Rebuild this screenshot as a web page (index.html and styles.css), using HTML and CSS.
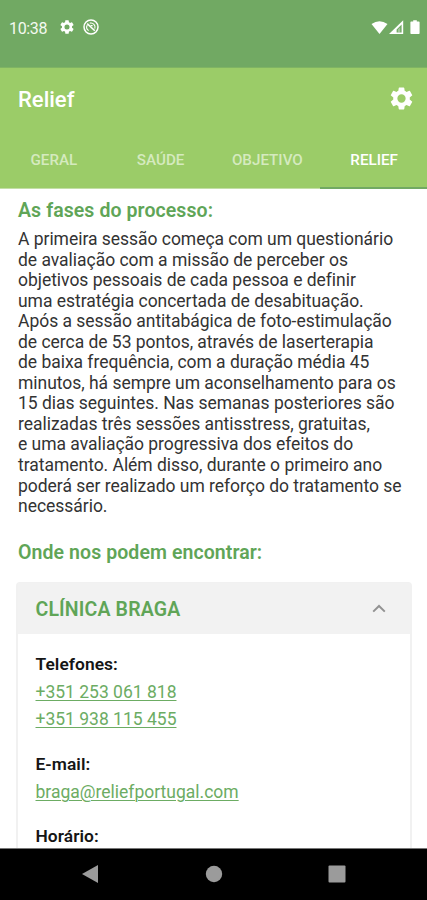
FILE: index.html
```html
<!DOCTYPE html>
<html lang="pt">
<head>
<meta charset="utf-8">
<title>Relief</title>
<link rel="stylesheet" href="styles.css">
</head>
<body>
<svg class="defs" width="0" height="0" aria-hidden="true">
  <symbol id="gear" viewBox="2 2 20 20"><path d="M19.14 12.94c.04-.3.06-.61.06-.94 0-.32-.02-.64-.07-.94l2.03-1.58a.49.49 0 0 0 .12-.61l-1.92-3.32a.49.49 0 0 0-.59-.22l-2.39.96c-.5-.38-1.03-.7-1.62-.94l-.36-2.54a.48.48 0 0 0-.48-.41h-3.84c-.24 0-.43.17-.47.41l-.36 2.54c-.59.24-1.13.57-1.62.94l-2.39-.96a.48.48 0 0 0-.59.22L2.74 8.87c-.12.21-.08.47.12.61l2.03 1.58c-.05.3-.09.63-.09.94s.02.64.07.94l-2.03 1.58a.49.49 0 0 0-.12.61l1.92 3.32c.12.22.37.29.59.22l2.39-.96c.5.38 1.03.7 1.62.94l.36 2.54c.05.24.24.41.48.41h3.84c.24 0 .44-.17.47-.41l.36-2.54c.59-.24 1.13-.56 1.62-.94l2.39.96c.22.08.47 0 .59-.22l1.92-3.32a.48.48 0 0 0-.12-.61l-2.01-1.58zM12 15.6a3.6 3.6 0 1 1 0-7.2 3.6 3.6 0 0 1 0 7.2z"/></symbol>
</svg>
<div class="screen">
  <div class="status">
    <span class="time">10:38</span>
    <svg class="s-gear"><use href="#gear"/></svg>
    <svg class="s-sync" viewBox="0 0 16 16"><g fill="none" stroke="#fff"><circle cx="8" cy="8" r="7" stroke-width="1.5"/><path d="M5.6 11.6A4.2 4.2 0 0 1 4.3 6M6.8 4.1A4.2 4.2 0 0 1 11.8 9.6M7.6 6.6H9.6" stroke-width="1.1"/><path d="M4.2 4.6l7.6 7.2" stroke-width="1.5"/></g></svg>
    <svg class="s-right" viewBox="0 0 50 16" fill="#fff"><path d="M0.5 4Q8.5-1.6 16.5 4L8.5 14z"/><path fill-rule="evenodd" d="M18 14L32.2 .2V14zM25.6 12.5H30.6V4.6L25.6 9.6z"/><path d="M26.9 12.5V9.6L29.2 7.3v5.2z" opacity=".35"/><path d="M40.2 1.4h2V.2h3.6v1.2h2a.8.8 0 0 1 .8.8v11a.8.8 0 0 1-.8.8h-7.6a.8.8 0 0 1-.8-.8v-11a.8.8 0 0 1 .8-.8z"/></svg>
  </div>
  <header>
    <div class="bar"><h1>Relief</h1><svg class="gear"><use href="#gear"/></svg></div>
    <nav><span>GERAL</span><span>SAÚDE</span><span>OBJETIVO</span><span class="active">RELIEF</span></nav>
  </header>
  <main>
    <h2>As fases do processo:</h2>
    <p class="copy">A primeira sessão começa com um questionário<br>de avaliação com a missão de perceber os<br>objetivos pessoais de cada pessoa e definir<br>uma estratégia concertada de desabituação.<br>Após a sessão antitabágica de foto-estimulação<br>de cerca de 53 pontos, através de laserterapia<br>de baixa frequência, com a duração média 45<br>minutos, há sempre um aconselhamento para os<br>15 dias seguintes. Nas semanas posteriores são<br>realizadas três sessões antisstress, gratuitas,<br>e uma avaliação progressiva dos efeitos do<br>tratamento. Além disso, durante o primeiro ano<br>poderá ser realizado um reforço do tratamento se<br>necessário.</p>
    <h2 class="where">Onde nos podem encontrar:</h2>
    <section class="card">
      <div class="card-head"><h3>CLÍNICA BRAGA</h3><svg class="chev" viewBox="0 0 14 9"><path d="M1.2 7.6L7 2l5.8 5.6" fill="none" stroke="#929292" stroke-width="2"/></svg></div>
      <div class="card-body">
        <h4>Telefones:</h4>
        <a>+351 253 061 818</a>
        <a>+351 938 115 455</a>
        <h4 class="gap">E-mail:</h4>
        <a class="mail">braga@reliefportugal.com</a>
        <h4 class="gap">Horário:</h4>
      </div>
    </section>
  </main>
  <footer>
    <svg viewBox="0 0 18 18"><path d="M17 0v18L1 9z"/></svg>
    <svg viewBox="0 0 18 18"><circle cx="9" cy="9" r="8.2"/></svg>
    <svg viewBox="0 0 18 18"><rect x=".5" y=".5" width="17" height="17" rx="1"/></svg>
  </footer>
</div>
</body>
</html>
```
FILE: styles.css
```css
* { box-sizing: border-box; }
body, h1, h2, h3, h4, p { margin: 0; }
body { font-family: Roboto, sans-serif; background: #fff; overflow: hidden; }
.defs { display: block; }
.screen { width: 427px; height: 900px; display: flex; flex-direction: column; overflow: hidden; }
.status { flex: none; height: 68px; background: #71a963; display: flex; align-items: flex-start; padding: 20px 6px 0 9px; color: #f4faf1; border-bottom: 1px solid #7fb463; }
.time { width: 51px; font-size: 16px; line-height: 17px; letter-spacing: -0.35px; }
.s-gear { width: 14px; height: 14px; fill: #fff; }
.s-sync { width: 16px; height: 16px; margin: -1px 0 0 9px; }
.s-right { width: 50px; height: 16px; margin-left: auto; }
header { flex: none; height: 121px; background: #9bcc68; color: #fff; border-bottom: 1px solid #c3dfa6; }
.bar { height: 64px; display: flex; align-items: center; justify-content: space-between; padding: 0 14px 0 18px; }
h1 { font-size: 22px; font-weight: 500; line-height: 26px; }
.gear { width: 23px; height: 23px; fill: #fff; margin-top: -4px; }
nav { display: grid; grid-template-columns: repeat(4, 1fr); height: 57px; }
nav span { display: flex; justify-content: center; align-items: center; padding: 0 0 1px 1px; font-size: 15.2px; font-weight: 500; color: #d5eabf; }
nav .active { color: #fff; border-bottom: 2px solid #71a963; padding-bottom: 0; }
main { flex: 1; min-height: 0; overflow: hidden; padding: 11px 15px 0 16px; }
h2 { font-size: 19.5px; font-weight: 600; line-height: 22px; letter-spacing: 0.08px; color: #60a557; padding-left: 2px; white-space: nowrap; }
.copy { margin-top: 7px; padding-left: 2px; font-size: 17.5px; line-height: 20.54px; letter-spacing: -0.03px; color: #333; white-space: nowrap; }
.where { margin-top: 25px; }
.card { margin-top: 18px; border: 2px solid #f1f1f1; border-top-width: 1px; border-radius: 4px 4px 0 0; height: 400px; }
.card-head { height: 51px; background: #f2f2f2; display: flex; align-items: center; justify-content: space-between; padding: 2px 24px 0 17.5px; }
h3 { font-size: 19.5px; font-weight: 600; letter-spacing: 0.15px; color: #60a557; }
.chev { width: 14px; height: 9px; margin-top: -2px; }
.card-body { padding: 20px 17.5px 0; }
h4 { font-size: 17.4px; font-weight: 600; line-height: 20px; letter-spacing: 0.05px; color: #151515; margin-bottom: 6px; }
.gap { margin-top: 22.5px; }
.card-body a { display: block; width: max-content; font-size: 17.5px; line-height: 24px; color: #6cac63; text-decoration: underline; text-decoration-thickness: 1px; text-underline-offset: 2px; margin-bottom: 3.5px; }
footer { flex: none; height: 52px; background: #000; border-top: 1px solid #777; display: flex; align-items: center; justify-content: space-between; padding: 0 81px 1px 81px; }
footer svg { width: 18px; height: 18px; fill: #9b9b9b; }
```
